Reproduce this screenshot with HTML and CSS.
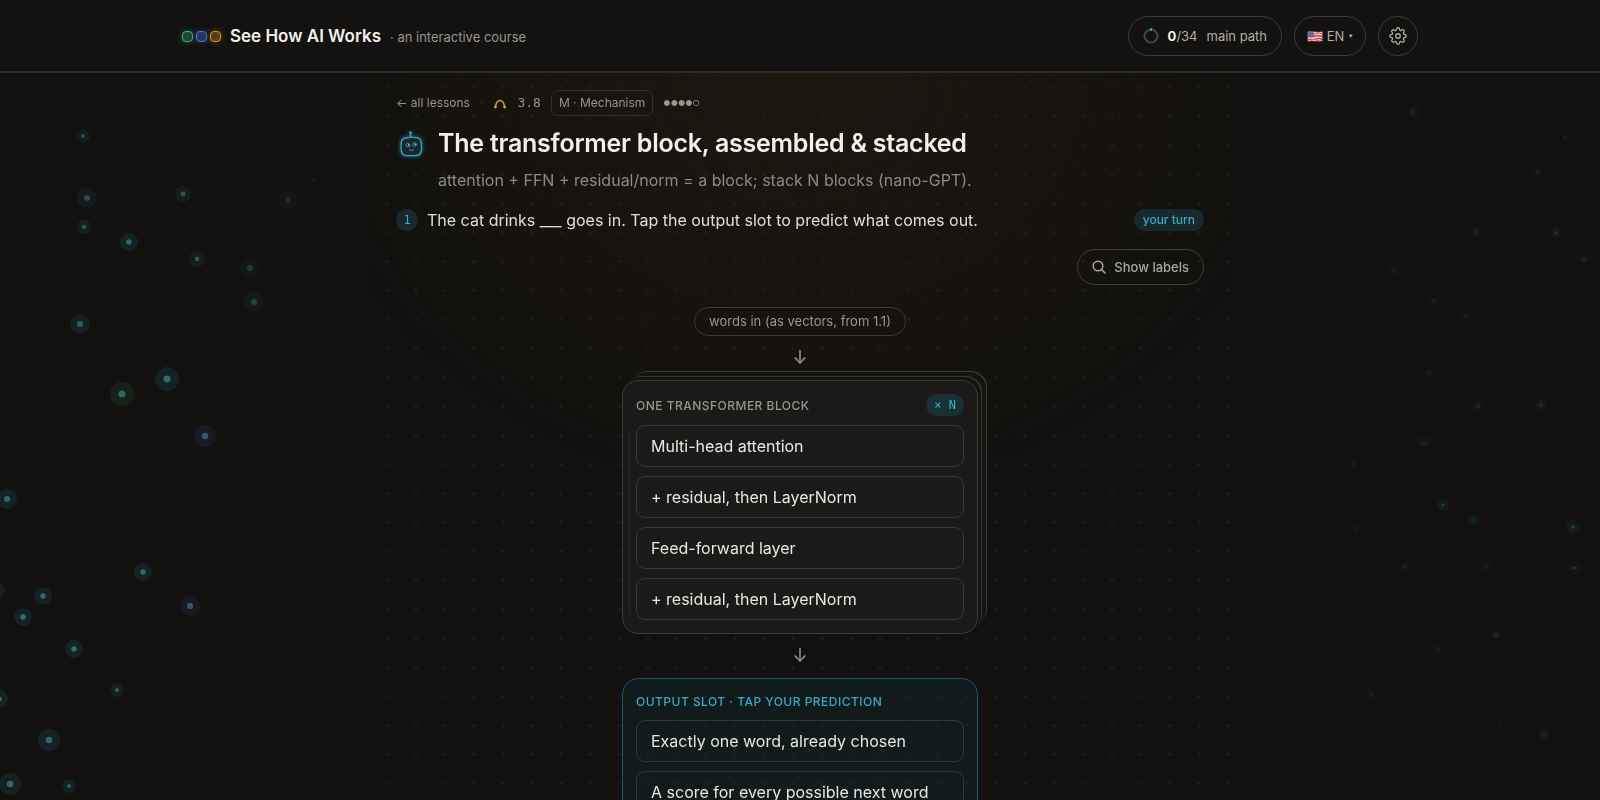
FILE: index.html
```
<!DOCTYPE html>
<html lang="en">
<head>
  <meta charset="UTF-8">
  <meta name="viewport" content="width=device-width, initial-scale=1.0">
  <title>The transformer block, assembled &amp; stacked</title>
  <link rel="stylesheet" href="styles.css">
</head>
<body>
  <svg class="nodes nodes-left" id="nodesLeft" width="400" height="800" aria-hidden="true"></svg>
  <svg class="nodes nodes-right" id="nodesRight" width="400" height="800" aria-hidden="true"></svg>

  <header class="site-header">
    <div class="header-inner">
      <a class="brand" href="#">
        <span class="logo">
          <i class="tile tile-green"></i>
          <i class="tile tile-blue"></i>
          <i class="tile tile-amber"></i>
        </span>
        <span class="brand-name">See How AI Works</span>
        <span class="brand-sub">· an interactive course</span>
      </a>
      <div class="header-tools">
        <a class="pill progress" href="#path">
          <svg width="16" height="16" viewBox="0 0 16 16" fill="none" stroke-width="2.2">
            <circle cx="8" cy="8" r="6.5" stroke="#45433f"/>
            <path d="M7 1.6a6.5 6.5 0 0 1 2 0" stroke="#3fc1e0"/>
          </svg>
          <span><b>0</b>/34</span>
          <span>main path</span>
        </a>
        <label class="pill lang">
          <select aria-label="Language">
            <option>🇺🇸 EN</option>
          </select>
          <span class="caret">▾</span>
        </label>
        <button class="pill gear" type="button" aria-label="Settings">
          <svg width="18" height="18" viewBox="0 0 24 24" fill="none" stroke="currentColor" stroke-width="1.7" stroke-linejoin="round">
            <circle cx="12" cy="12" r="3"/>
            <path d="M19.4 15a1.65 1.65 0 0 0 .33 1.82l.06.06a2 2 0 1 1-2.83 2.83l-.06-.06a1.65 1.65 0 0 0-1.82-.33 1.65 1.65 0 0 0-1 1.51V21a2 2 0 1 1-4 0v-.09A1.65 1.65 0 0 0 9 19.4a1.65 1.65 0 0 0-1.82.33l-.06.06a2 2 0 1 1-2.83-2.83l.06-.06a1.65 1.65 0 0 0 .33-1.82 1.65 1.65 0 0 0-1.51-1H3a2 2 0 1 1 0-4h.09A1.65 1.65 0 0 0 4.6 9a1.65 1.65 0 0 0-.33-1.82l-.06-.06a2 2 0 1 1 2.83-2.83l.06.06a1.65 1.65 0 0 0 1.82.33H9a1.65 1.65 0 0 0 1-1.51V3a2 2 0 1 1 4 0v.09a1.65 1.65 0 0 0 1 1.51 1.65 1.65 0 0 0 1.82-.33l.06-.06a2 2 0 1 1 2.83 2.83l-.06.06a1.65 1.65 0 0 0-.33 1.82V9a1.65 1.65 0 0 0 1.51 1H21a2 2 0 1 1 0 4h-.09a1.65 1.65 0 0 0-1.51 1z"/>
          </svg>
        </button>
      </div>
    </div>
  </header>

  <main class="lesson">
    <nav class="crumbs">
      <a href="#lessons">← all lessons</a>
      <span class="sep">·</span>
      <svg width="14" height="12" viewBox="0 0 14 12" fill="none" stroke="#e0a32e" stroke-width="1.5">
        <path d="M2.400 9.500C4 1.500 10 1.500 11.600 9.500"/>
        <circle cx="2.4" cy="10" r="1" fill="#e0a32e" stroke-width="1"/>
        <circle cx="11.6" cy="10" r="1" fill="#e0a32e" stroke-width="1"/>
      </svg>
      <span class="mono">3.8</span>
      <span class="tag">M · Mechanism</span>
      <span class="level">●●●●○</span>
    </nav>

    <div class="title">
      <svg class="robot" width="32" height="32" viewBox="0 0 32 32" fill="none" stroke="#35a3bd" stroke-width="1.3" stroke-linecap="round">
        <path d="M14.500 7.500v4"/>
        <circle cx="14.500" cy="6.600" r="1" fill="#35a3bd" stroke-width="1"/>
        <path d="M9.500 12q5.500-1.200 11-.4q4.300.6 4.600 4.700q.7 5 .1 8.700q-.8 4-4.700 4.300q-5.500.7-11 .1q-3.600-.5-4.100-4.300q-.6-4.500-.1-8.700q.6-3.900 4.200-4.400z" fill="#1a2629"/>
        <circle cx="12" cy="19" r="1.9" stroke-width=".8"/>
        <circle cx="18.500" cy="18.500" r="1.9" stroke-width=".8"/>
        <path d="M12.600 18.800v.4M19.100 18.200v.4" stroke="#a6e6f2"/>
        <path d="M13.500 24q2 1.200 4.200-.2" stroke-width="1"/>
      </svg>
      <div>
        <h1>The transformer block, assembled &amp; stacked</h1>
        <p class="lead">attention + FFN + residual/norm = a block; stack N blocks (nano-GPT).</p>
      </div>
    </div>

    <div class="step">
      <span class="step-num">1</span>
      <p>The cat drinks ___ goes in. Tap the output slot to predict what comes out.</p>
      <span class="turn">your turn</span>
    </div>

    <div class="toolbar">
      <button class="labels-btn" type="button">
        <svg width="14" height="14" viewBox="0 0 14 14" fill="none" stroke="currentColor" stroke-width="1.5" stroke-linecap="round">
          <circle cx="6" cy="6" r="4.8"/>
          <path d="M9.600 9.600L13 13"/>
        </svg>
        Show labels
      </button>
    </div>

    <div class="flow">
      <span class="input-pill">words in (as vectors, from 1.1)</span>
      <span class="arrow">↓</span>
      <section class="card block">
        <div class="card-head">
          <h2>One transformer block</h2>
          <span class="times">× N</span>
        </div>
        <div class="row">Multi-head attention</div>
        <div class="row">+ residual, then LayerNorm</div>
        <div class="row">Feed-forward layer</div>
        <div class="row">+ residual, then LayerNorm</div>
      </section>
      <span class="arrow">↓</span>
      <section class="card output">
        <div class="card-head">
          <h2>Output slot · tap your prediction</h2>
        </div>
        <button class="row" type="button">Exactly one word, already chosen</button>
        <button class="row" type="button">A score for every possible next word</button>
      </section>
    </div>
  </main>

  <script>
    const HALO = { cyan: '#2f9fc0', teal: '#2fa3a3', green: '#3f9f68', violet: '#5b5bd0' };

    // x, y, halo radius, colour, strength
    const left = [
      [83, 136, 7, 'cyan', 0.6], [87, 198, 10, 'cyan', 0.6], [84, 227, 7, 'cyan', 0.8],
      [129, 242, 9, 'cyan', 0.9], [183, 194, 8, 'green', 0.7], [197, 259, 8, 'green', 0.7],
      [250, 268, 10, 'green', 0.4], [254, 302, 10, 'teal', 0.5], [288, 200, 9, 'violet', 0.3],
      [314, 180, 8, 'violet', 0.1], [80, 324, 10, 'cyan', 0.8], [167, 379, 12, 'cyan', 0.9],
      [122, 394, 12, 'green', 0.9], [205, 436, 11, 'violet', 0.8], [7, 499, 10, 'cyan', 0.9],
      [143, 572, 9, 'cyan', 0.9], [-4, 590, 9, 'teal', 0.9], [43, 596, 9, 'cyan', 0.9],
      [23, 617, 9, 'cyan', 1], [190, 606, 10, 'violet', 0.8], [74, 649, 9, 'teal', 1],
      [304, 670, 6, 'violet', 0.1], [117, 690, 7, 'green', 0.8], [280, 702, 5, 'green', 0.1],
      [-1, 699, 9, 'teal', 0.9], [49, 740, 11, 'cyan', 0.9], [10, 784, 11, 'teal', 0.9],
      [69, 786, 7, 'cyan', 0.8]
    ];
    const right = [
      [213, 112, 6, 'green', 0.4], [365, 137, 3, 'violet', 0.4], [337, 172, 5, 'violet', 0.4],
      [276, 232, 5, 'cyan', 0.4], [356, 233, 5, 'cyan', 0.5], [384, 259, 5, 'cyan', 0.4],
      [194, 270, 5, 'violet', 0.3], [168, 258, 4, 'cyan', 0.1], [233, 301, 4, 'cyan', 0.3],
      [265, 316, 4, 'violet', 0.3], [155, 341, 4, 'violet', 0.2], [229, 373, 3, 'green', 0.4],
      [278, 406, 5, 'green', 0.4], [341, 405, 5, 'cyan', 0.5], [224, 443, 6, 'teal', 0.4],
      [153, 464, 4, 'violet', 0.3], [243, 505, 6, 'cyan', 0.5], [274, 520, 6, 'cyan', 0.4],
      [156, 529, 6, 'violet', 0.2], [205, 567, 5, 'cyan', 0.3], [286, 566, 5, 'violet', 0.3],
      [373, 527, 7, 'teal', 0.5], [374, 568, 6, 'violet', 0.5], [165, 630, 6, 'violet', 0.1],
      [296, 635, 4, 'teal', 0.5], [238, 649, 5, 'violet', 0.3], [171, 694, 4, 'cyan', 0.4],
      [300, 725, 4, 'teal', 0.2], [344, 734, 6, 'green', 0.4], [150, 766, 5, 'green', 0.1]
    ];

    function addCircle(svg, x, y, r, fill, opacity) {
      const c = document.createElementNS('http://www.w3.org/2000/svg', 'circle');
      c.setAttribute('cx', x);
      c.setAttribute('cy', y);
      c.setAttribute('r', r);
      c.setAttribute('fill', fill);
      c.setAttribute('fill-opacity', opacity);
      svg.appendChild(c);
    }

    function drawNodes(id, nodes, haloAlpha, core, coreAlpha) {
      const svg = document.getElementById(id);
      nodes.forEach(([x, y, r, color, k]) => {
        addCircle(svg, x, y, r, HALO[color], haloAlpha * k);
        addCircle(svg, x, y, r * 0.3, core, coreAlpha * k);
      });
    }

    drawNodes('nodesLeft', left, 0.13, '#5fb8c4', 0.5);
    drawNodes('nodesRight', right, 0.13, '#4f9fb0', 0.4);
  </script>
</body>
</html>
```
FILE: styles.css
```
* { margin: 0; padding: 0; box-sizing: border-box; }
body {
  font-family: Inter, 'Liberation Sans', sans-serif;
  background: #12110f;
  color: #e0ddd7;
  font-size: 16px;
  line-height: 24px;
  min-height: 100vh;
  overflow-x: hidden;
}
a { color: inherit; text-decoration: none; }
button, select { font: inherit; color: inherit; cursor: pointer; }
.nodes {
  position: fixed;
  top: 0;
  z-index: -1;
}
.nodes-left { left: 0; }
.nodes-right { right: 0; }

/* header */
.site-header {
  background: #131210;
  border-bottom: 2px solid #2b2927;
}
.header-inner {
  display: flex;
  justify-content: space-between;
  align-items: center;
  max-width: 1280px;
  margin: 0 auto;
  padding: 16px 22px 15px;
}
.brand {
  display: flex;
  align-items: baseline;
  gap: 9px;
}
.logo {
  display: flex;
  align-self: center;
  gap: 3px;
}
.tile {
  width: 11px;
  height: 11px;
  border: 1px solid;
  border-radius: 4px;
}
.tile-green { color: #3fa877; background: #1d4a37; box-shadow: 0 0 6px #1d5a40; }
.tile-blue { color: #5273c4; background: #24365f; box-shadow: 0 0 6px #22356b; }
.tile-amber { color: #d3922c; background: #56401a; box-shadow: 0 0 6px #5c4012; }
.brand-name {
  font-size: 17px;
  font-weight: 600;
  color: #f3f0ea;
}
.brand-sub {
  font-size: 13px;
  color: #98958f;
}
.header-tools {
  display: flex;
  gap: 12px;
}
.pill {
  display: flex;
  align-items: center;
  height: 40px;
  border: 1px solid #3b3936;
  border-radius: 20px;
  background: none;
  font-size: 13px;
  color: #b0ada7;
}
.progress {
  gap: 9px;
  padding: 0 14px;
}
.progress b { color: #f3f0ea; }
.lang {
  gap: 4px;
  padding: 0 12px;
}
.lang select {
  appearance: none;
  border: 0;
  background: none;
}
.caret { font-size: 7px; }
.gear {
  width: 40px;
  justify-content: center;
}

/* lesson */
.lesson {
  max-width: 860px;
  margin: 0 auto;
  padding: 17px 26px 40px;
  background:
    radial-gradient(circle, #201e1b 1px, transparent 2px) calc(50% - 7px) 0 / 29px 29px,
    radial-gradient(ellipse 500px 420px at 50% 0, #1d1710, transparent);
}
.crumbs {
  display: flex;
  align-items: center;
  gap: 10px;
  font-size: 12px;
  color: #98958f;
}
.sep { color: #44413d; }
.mono, .step-num, .times {
  font-family: 'DejaVu Sans Mono', monospace;
}
.mono { font-size: 13px; }
.tag {
  padding: 0 7px;
  border: 1px solid #33312e;
  border-radius: 7px;
}
.level { font-size: 8px; }
.title {
  display: flex;
  gap: 10px;
  margin-top: 10px;
}
.robot { filter: drop-shadow(0 0 2px #1b7f96); }
h1 {
  font-size: 25px;
  font-weight: 600;
  line-height: 34px;
  letter-spacing: -0.01em;
  color: #f3f0ea;
}
.lead {
  margin-top: 8px;
  color: #8d8a84;
}
.step {
  display: flex;
  align-items: center;
  gap: 9px;
  margin-top: 16px;
}
.step-num {
  width: 22px;
  height: 22px;
  border-radius: 50%;
  background: #17292d;
  color: #39a9c4;
  font-size: 12px;
  line-height: 22px;
  text-align: center;
}
.turn {
  margin-left: auto;
  padding: 0 9px;
  border-radius: 11px;
  background: #17292d;
  color: #39a9c4;
  font-size: 12px;
  font-weight: 500;
  line-height: 22px;
}
.toolbar {
  display: flex;
  justify-content: flex-end;
  margin-top: 17px;
}
.labels-btn {
  display: flex;
  align-items: center;
  gap: 8px;
  height: 36px;
  padding: 0 14px;
  border: 1px solid #403e3a;
  border-radius: 18px;
  background: none;
  font-size: 13px;
  font-weight: 500;
  color: #aaa7a1;
}

/* flow */
.flow {
  display: flex;
  flex-direction: column;
  align-items: center;
  margin-top: 22px;
}
.input-pill {
  height: 29px;
  padding: 0 14px;
  border: 1px solid #3b3936;
  border-radius: 15px;
  font-size: 13px;
  line-height: 27px;
  color: #98958f;
}
.arrow {
  margin: 10px 0;
  font-size: 18px;
  color: #98958f;
}
.card {
  display: flex;
  flex-direction: column;
  gap: 9px;
  width: 100%;
  max-width: 356px;
  padding: 13px;
  border: 1px solid #3b3936;
  border-radius: 16px;
}
.block {
  position: relative;
  background: #1b1a19;
  box-shadow:
    3px -3px 0 0 #151412, 4px -4px 0 0 #3b3936,
    8px -8px 0 0 #151412, 9px -9px 0 0 #3b3936;
}
.block::before {
  content: '';
  position: absolute;
  left: 5px;
  top: 48px;
  bottom: 18px;
  width: 3px;
  border-radius: 2px;
  background: #1e1e2a;
}
.card-head {
  display: flex;
  justify-content: space-between;
  align-items: center;
}
h2 {
  font-size: 12px;
  font-weight: 500;
  line-height: 19px;
  text-transform: uppercase;
  letter-spacing: 0.04em;
  color: #98958f;
}
.times {
  padding: 0 8px;
  border-radius: 11px;
  background: #193035;
  color: #39b4d0;
  font-size: 12px;
  line-height: 22px;
}
.row {
  height: 42px;
  padding: 0 14px;
  border: 1px solid #383633;
  border-radius: 9px;
  background: none;
  color: #e9e6e1;
  line-height: 40px;
  text-align: left;
}
.output {
  border-color: #1f5663;
  background: rgba(20, 45, 52, 0.35);
}
.output h2 { color: #39a9c4; }

@media (max-width: 700px) {
  .brand-sub { display: none; }
  .header-inner { flex-wrap: wrap; gap: 12px; }
  .step { flex-wrap: wrap; }
}
```
